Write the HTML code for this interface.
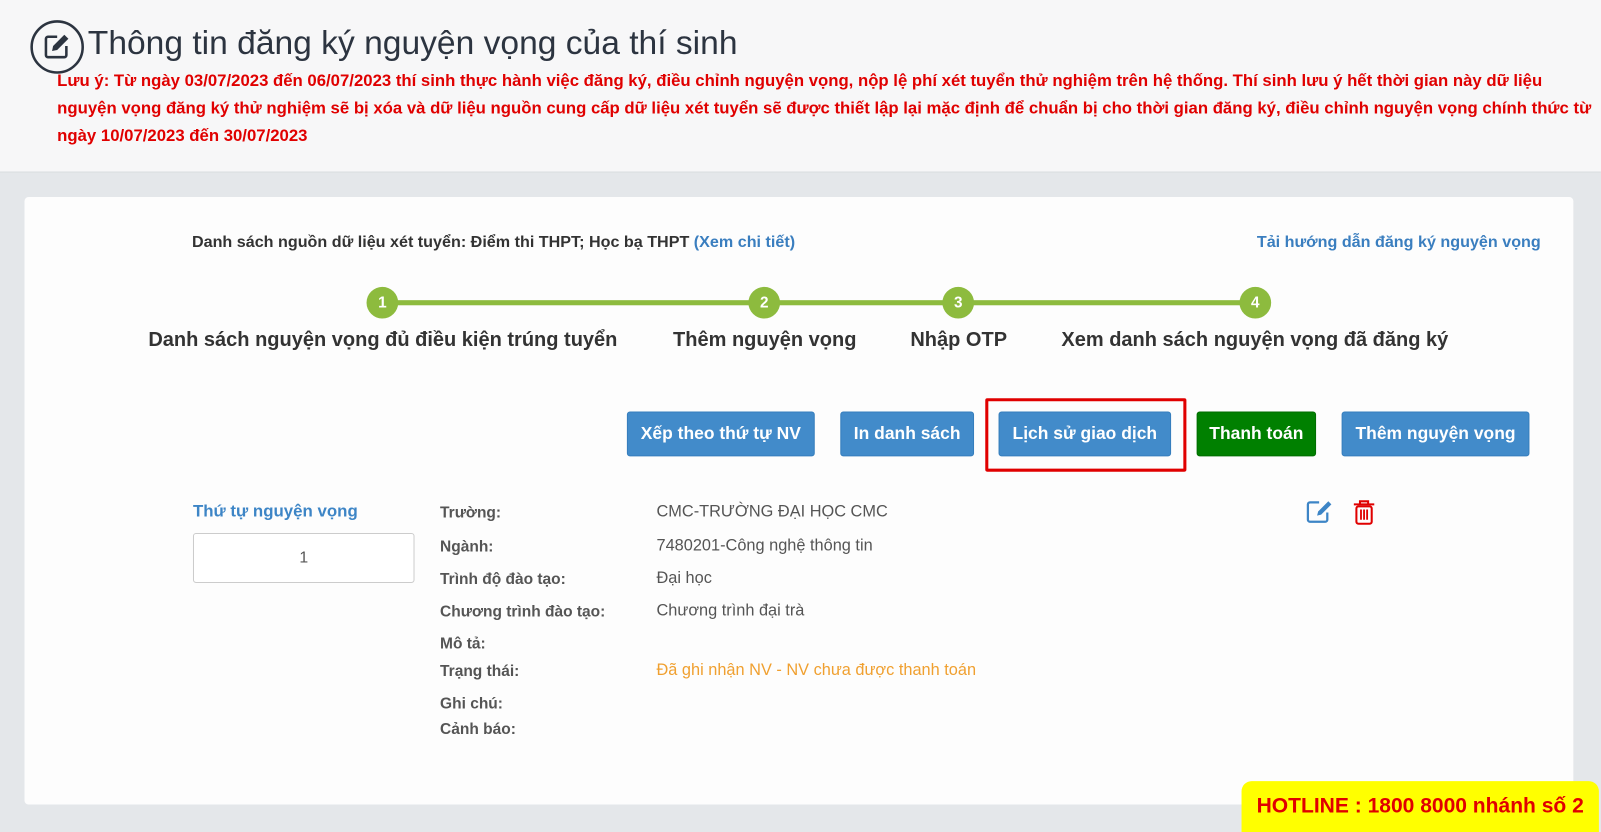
<!DOCTYPE html>
<html><head><meta charset="utf-8"><style>
*{margin:0;padding:0;box-sizing:border-box}
html,body{width:1601px;height:829px;overflow:hidden;background:#e4e7ea;font-family:"Liberation Sans",Arial,sans-serif}
#w{position:absolute;left:0;top:0;width:1568px;height:812px;transform:scale(1.021);transform-origin:0 0}
.hdr{position:absolute;left:0;top:0;width:1568px;height:169px;background:#f7f7f8;border-bottom:1px solid #d8dbde}
.a{position:absolute;white-space:nowrap}
.note{left:56px;color:#e00000;font-weight:bold;font-size:16.4px}
.card{position:absolute;left:24px;top:193px;width:1517px;height:595px;background:#fdfdfd;border-radius:4px}
.circ{position:absolute;width:31px;height:31px;border-radius:50%;background:#8dbb3e;color:#fff;font-weight:bold;font-size:15px;text-align:center;line-height:31px}
.step{font-size:19.6px;font-weight:bold;color:#333;transform:translateX(-50%)}
.btn{position:absolute;top:403px;height:44px;background:#428bca;border:1px solid #357ebd;border-radius:3px;color:#fff;font-weight:bold;font-size:17.1px;text-align:center;line-height:42px;white-space:nowrap}
.lb{left:431px;font-weight:bold;font-size:15.2px;color:#555}
.v{left:643px;font-size:16px;color:#555}
</style></head><body><div id="w">
<div class="hdr"></div>
<svg class="a" style="left:29px;top:19px" width="54" height="54" viewBox="0 0 54 54"><circle cx="27" cy="27" r="25" fill="none" stroke="#2c3440" stroke-width="2.5"/><path d="M27 17h-9a2 2 0 0 0-2 2v16a2 2 0 0 0 2 2h16a2 2 0 0 0 2-2v-9" fill="none" stroke="#2c3440" stroke-width="2.5"/><path d="M34 15l4 4-11 11-5 1 1-5z" fill="#2c3440"/></svg>
<div class="a" style="left:86px;top:23px;font-size:32.9px;color:#2c3440">Thông tin đăng ký nguyện vọng của thí sinh</div>
<div class="a note" style="top:70px">Lưu ý: Từ ngày 03/07/2023 đến 06/07/2023 thí sinh thực hành việc đăng ký, điều chỉnh nguyện vọng, nộp lệ phí xét tuyển thử nghiệm trên hệ thống. Thí sinh lưu ý hết thời gian này dữ liệu</div>
<div class="a note" style="top:97px">nguyện vọng đăng ký thử nghiệm sẽ bị xóa và dữ liệu nguồn cung cấp dữ liệu xét tuyển sẽ được thiết lập lại mặc định để chuẩn bị cho thời gian đăng ký, điều chỉnh nguyện vọng chính thức từ</div>
<div class="a note" style="top:124px">ngày 10/07/2023 đến 30/07/2023</div>
<div class="card"></div>
<div class="a" style="left:188px;top:229px;font-size:15.8px;font-weight:bold;color:#333">Danh sách nguồn dữ liệu xét tuyển: Điểm thi THPT; Học bạ THPT <span style="color:#3a7ebf">(Xem chi tiết)</span></div>
<div class="a" style="left:1231px;top:229px;font-size:15.8px;font-weight:bold;color:#3a7ebf">Tải hướng dẫn đăng ký nguyện vọng</div>
<div class="a" style="left:374px;top:294px;width:855px;height:5px;background:#8dbb3e"></div>
<div class="circ" style="left:359px;top:281px">1</div>
<div class="circ" style="left:733px;top:281px">2</div>
<div class="circ" style="left:923px;top:281px">3</div>
<div class="circ" style="left:1214px;top:281px">4</div>
<div class="a step" style="left:375px;top:322px">Danh sách nguyện vọng đủ điều kiện trúng tuyển</div>
<div class="a step" style="left:749px;top:322px">Thêm nguyện vọng</div>
<div class="a step" style="left:939px;top:322px">Nhập OTP</div>
<div class="a step" style="left:1229px;top:322px">Xem danh sách nguyện vọng đã đăng ký</div>
<div class="btn" style="left:614px;width:184px">Xếp theo thứ tự NV</div>
<div class="btn" style="left:823px;width:131px">In danh sách</div>
<div class="btn" style="left:978px;width:169px">Lịch sử giao dịch</div>
<div class="btn" style="left:1172px;width:117px;background:#008000;border-color:#006d00">Thanh toán</div>
<div class="btn" style="left:1314px;width:184px">Thêm nguyện vọng</div>
<div class="a" style="left:965px;top:390px;width:197px;height:72px;border:3px solid #e00000;border-radius:2px"></div>
<div class="a" style="left:189px;top:492px;font-size:16.5px;font-weight:bold;color:#3d85c6">Thứ tự nguyện vọng</div>
<div class="a" style="left:189px;top:522px;width:217px;height:49px;border:1px solid #ccc;border-radius:3px;background:#fff;text-align:center;line-height:47px;font-size:15.5px;color:#555">1</div>
<div class="a lb" style="top:494px">Trường:</div>
<div class="a lb" style="top:527px">Ngành:</div>
<div class="a lb" style="top:559px">Trình độ đào tạo:</div>
<div class="a lb" style="top:591px">Chương trình đào tạo:</div>
<div class="a lb" style="top:622px">Mô tả:</div>
<div class="a lb" style="top:649px">Trạng thái:</div>
<div class="a lb" style="top:681px">Ghi chú:</div>
<div class="a lb" style="top:706px">Cảnh báo:</div>
<div class="a v" style="top:493px">CMC-TRƯỜNG ĐẠI HỌC CMC</div>
<div class="a v" style="top:526px">7480201-Công nghệ thông tin</div>
<div class="a v" style="top:558px">Đại học</div>
<div class="a v" style="top:590px">Chương trình đại trà</div>
<div class="a v" style="top:648px;color:#f0a030">Đã ghi nhận NV - NV chưa được thanh toán</div>
<svg class="a" style="left:1279px;top:489px" width="28" height="24" viewBox="0 0 28 24"><path d="M13 3H4a2 2 0 0 0-2 2v15a2 2 0 0 0 2 2h15a2 2 0 0 0 2-2v-7" fill="none" stroke="#3d85c6" stroke-width="2.2"/><path d="M22 2l3 3-10 10-4 1 1-4z" fill="#3d85c6"/></svg>
<svg class="a" style="left:1325px;top:489px" width="22" height="26" viewBox="0 0 22 26"><path d="M1 5h20M7 5V2h8v3" fill="none" stroke="#e00000" stroke-width="2"/><rect x="3.5" y="7" width="15" height="17" rx="2" fill="none" stroke="#e00000" stroke-width="2"/><path d="M8 10v10M11 10v10M14 10v10" stroke="#e00000" stroke-width="1.8"/></svg>
<div class="a" style="left:1216px;top:765px;width:350px;height:50px;background:#ffff00;border-radius:10px 10px 0 0;color:#e00000;font-weight:bold;font-size:20.6px;text-align:center;line-height:50px">HOTLINE : 1800 8000 nhánh số 2</div>
</div></body></html>
